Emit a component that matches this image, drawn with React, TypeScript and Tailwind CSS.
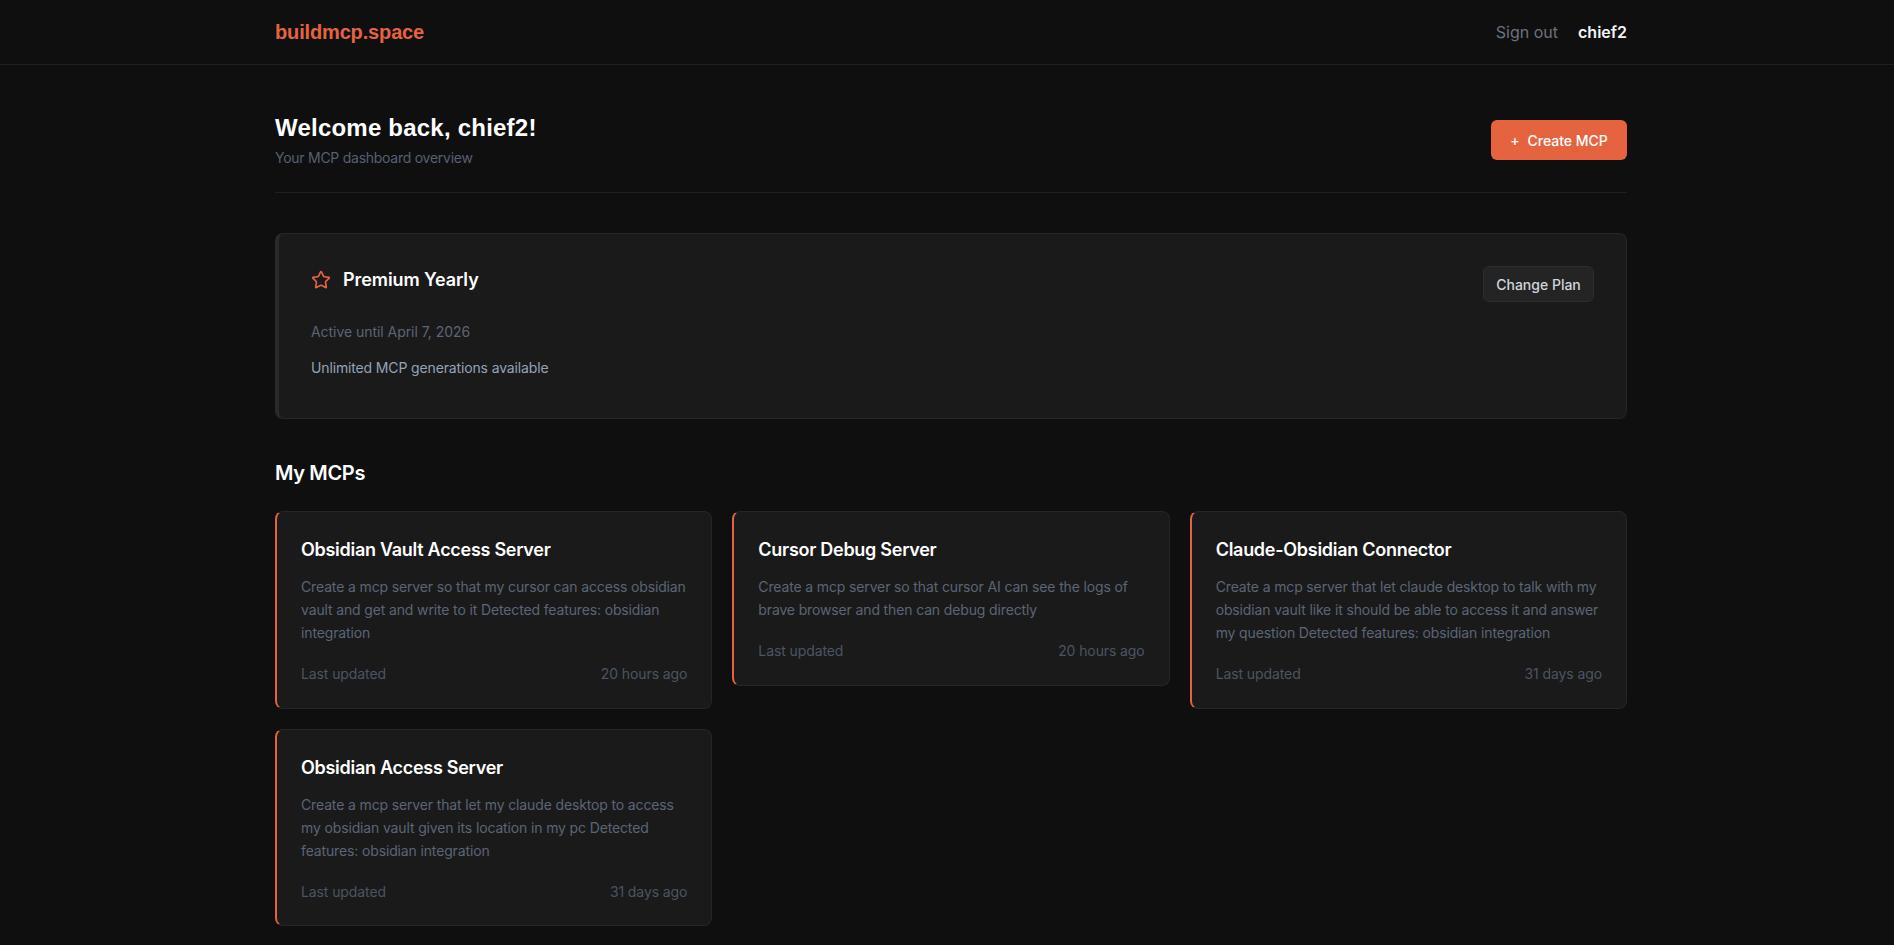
import { Star } from "lucide-react"

const mcps = [
    {
        title: "Obsidian Vault Access Server",
        desc: "Create a mcp server so that my cursor can access obsidian vault and get and write to it Detected features: obsidian integration",
        updated: "20 hours ago",
    },
    {
        title: "Cursor Debug Server",
        desc: "Create a mcp server so that cursor AI can see the logs of brave browser and then can debug directly",
        updated: "20 hours ago",
    },
    {
        title: "Claude-Obsidian Connector",
        desc: "Create a mcp server that let claude desktop to talk with my obsidian vault like it should be able to access it and answer my question Detected features: obsidian integration",
        updated: "31 days ago",
    },
    {
        title: "Obsidian Access Server",
        desc: "Create a mcp server that let my claude desktop to access my obsidian vault given its location in my pc Detected features: obsidian integration",
        updated: "31 days ago",
    },
]

const McpCard = ({ title, desc, updated }: (typeof mcps)[number]) => (
    <div className="rounded-lg border border-[#262626] border-l-2 border-l-[#e5633f] bg-[#1a1a1a] px-6 pt-6 pb-[23.5px]">
        <h3 className="text-[18px] leading-[28px] font-semibold tracking-[-0.28px] text-white">{title}</h3>
        <p className="mt-[11px] text-[14px] leading-[23px] tracking-[-0.14px] text-[#5b6577]">{desc}</p>
        <div className="mt-[20px] flex justify-between text-[14px] leading-[20px] tracking-[-0.1px] text-[#4b5563]">
            <span>Last updated</span>
            <span>{updated}</span>
        </div>
    </div>
)

const App = () => {
    return (
        <div className="min-h-screen bg-[#0f0f0f] font-['Inter',sans-serif]">
            <header className="h-[65px] border-b border-[#1f1f1f]">
                <div className="ml-[275px] flex h-full w-[1352px] items-center justify-between pb-[1px]">
                    <span className="font-['Liberation_Sans',sans-serif] text-[20px] font-bold tracking-[-0.15px] text-[#e5633f]">buildmcp.space</span>
                    <div className="flex items-center gap-5 text-[16px]">
                        <span className="text-[#6b7280]">Sign out</span>
                        <span className="font-semibold text-[#f3f4f6]">chief2</span>
                    </div>
                </div>
            </header>
            <main className="ml-[275px] w-[1352px] pt-[47px]">
                <div className="flex items-center justify-between border-b border-[#1f1f1f] pb-[24px]">
                    <div>
                        <h1 className="font-['Liberation_Sans',sans-serif] text-[24px] leading-[32px] font-bold tracking-[0.22px] text-white">Welcome back, chief2!</h1>
                        <p className="mt-[4px] text-[14px] leading-[20px] tracking-[-0.26px] text-[#566073]">Your MCP dashboard overview</p>
                    </div>
                    <button className="flex h-10 w-[136px] items-center justify-center gap-2 rounded-md bg-[#e5633f] text-[14px] font-medium text-white">
                        <span>+</span>
                        <span>Create MCP</span>
                    </button>
                </div>

                <section className="mt-10 flex h-[186px] items-start justify-between rounded-lg border border-[#262626] border-l-4 border-l-[#2a2a2a] bg-[#1a1a1a] pt-[32px] pr-[32px] pl-[32px]">
                    <div>
                        <div className="flex items-center gap-3">
                            <Star className="size-5 text-[#e5633f]" />
                            <h2 className="text-[18px] leading-[28px] font-semibold tracking-[-0.08px] text-white">Premium Yearly</h2>
                        </div>
                        <p className="mt-[28px] text-[14px] leading-[20px] tracking-[-0.05px] text-[#5b6577]">Active until April 7, 2026</p>
                        <p className="mt-[16px] text-[14px] leading-[20px] tracking-[-0.14px] text-[#94a3b8]">Unlimited MCP generations available</p>
                    </div>
                    <button className="h-9 w-[111px] rounded-md border border-[#2e2e2e] bg-[#242424] text-[14px] font-medium text-[#d1d5db]">
                        Change Plan
                    </button>
                </section>

                <h2 className="mt-[40px] text-[20px] leading-[28px] font-semibold tracking-[-0.35px] text-white">My MCPs</h2>
                <div className="mt-[24px] grid grid-cols-3 items-start gap-x-5 gap-y-[20px] pb-4">
                    {mcps.map((m) => (
                        <McpCard key={m.title} {...m} />
                    ))}
                </div>
            </main>
        </div>
    )
}

export default App
